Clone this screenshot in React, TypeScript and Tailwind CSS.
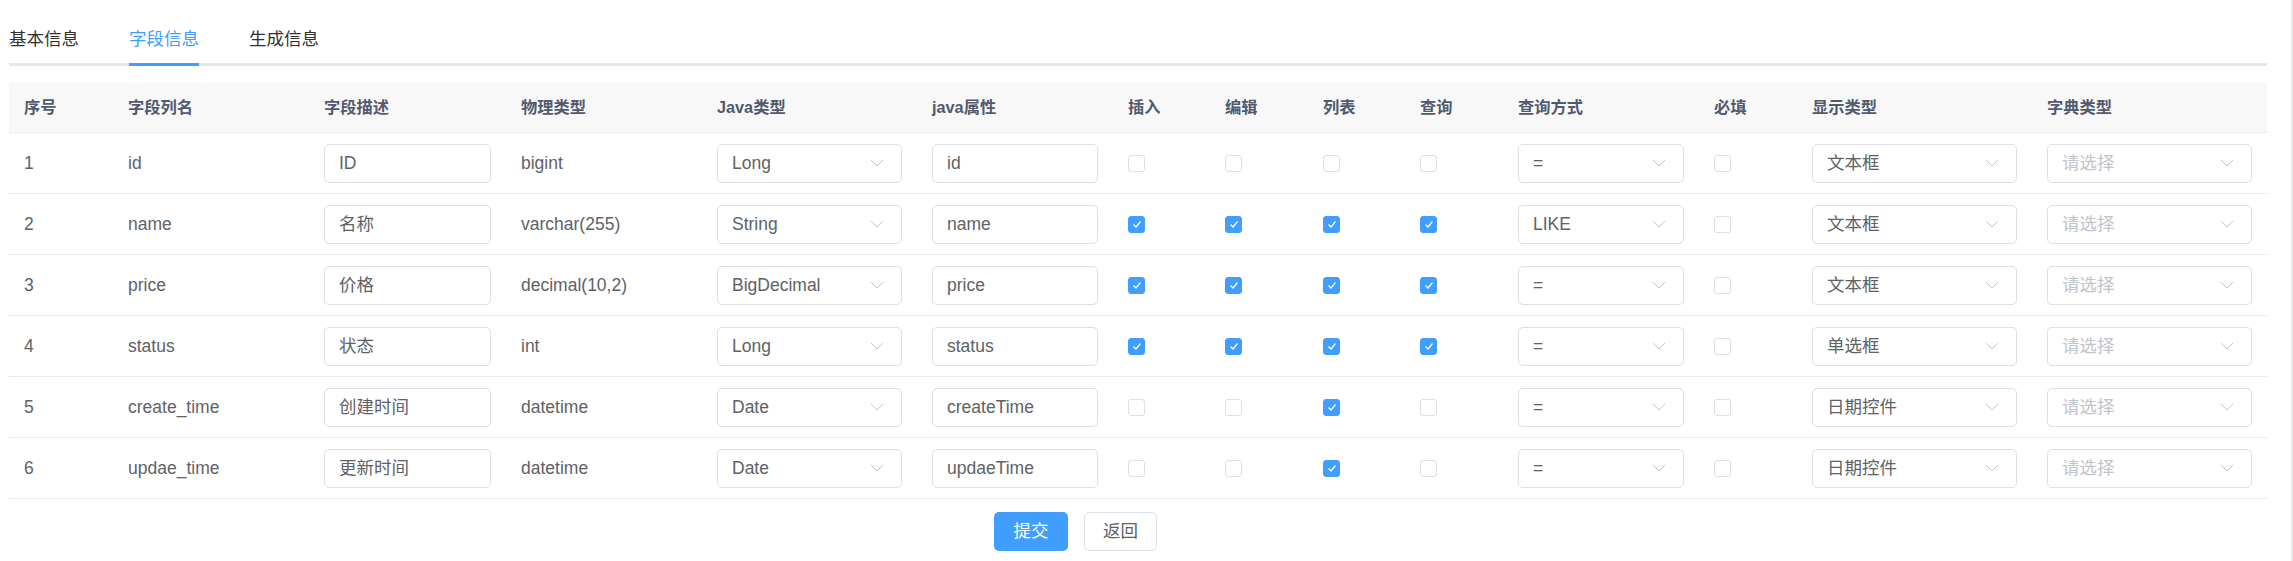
import React from 'react'

interface Field {
  id: number
  column: string
  comment: string
  dbType: string
  javaType: string
  javaField: string
  insert: boolean
  edit: boolean
  list: boolean
  query: boolean
  queryType: string
  htmlType: string
}

const fields: Field[] = [
  { id: 1, column: 'id', comment: 'ID', dbType: 'bigint', javaType: 'Long', javaField: 'id', insert: false, edit: false, list: false, query: false, queryType: '=', htmlType: '文本框' },
  { id: 2, column: 'name', comment: '名称', dbType: 'varchar(255)', javaType: 'String', javaField: 'name', insert: true, edit: true, list: true, query: true, queryType: 'LIKE', htmlType: '文本框' },
  { id: 3, column: 'price', comment: '价格', dbType: 'decimal(10,2)', javaType: 'BigDecimal', javaField: 'price', insert: true, edit: true, list: true, query: true, queryType: '=', htmlType: '文本框' },
  { id: 4, column: 'status', comment: '状态', dbType: 'int', javaType: 'Long', javaField: 'status', insert: true, edit: true, list: true, query: true, queryType: '=', htmlType: '单选框' },
  { id: 5, column: 'create_time', comment: '创建时间', dbType: 'datetime', javaType: 'Date', javaField: 'createTime', insert: false, edit: false, list: true, query: false, queryType: '=', htmlType: '日期控件' },
  { id: 6, column: 'updae_time', comment: '更新时间', dbType: 'datetime', javaType: 'Date', javaField: 'updaeTime', insert: false, edit: false, list: true, query: false, queryType: '=', htmlType: '日期控件' },
]

const headers = ['序号', '字段列名', '字段描述', '物理类型', 'Java类型', 'java属性', '插入', '编辑', '列表', '查询', '查询方式', '必填', '显示类型', '字典类型']

const gridCols =
  'grid grid-cols-[104px_196px_197px_196px_215px_196px_97px_98px_97px_98px_196px_98px_235px_235px]'

const Input = ({ value }: { value: string }) => (
  <div className="w-full h-[39px] flex items-center pl-[14px] border border-[#dcdfe6] rounded-[5px] bg-white text-[#606266]">
    {value}
  </div>
)

const Select = ({ value, placeholder }: { value?: string; placeholder?: string }) => (
  <div className="w-full h-[39px] flex items-center justify-between pl-[14px] pr-[17px] border border-[#dcdfe6] rounded-[5px] bg-white">
    <span className={value ? 'text-[#606266]' : 'text-[#c0c4cc]'}>{value || placeholder}</span>
    <svg width="14" height="8" viewBox="0 0 14 8" fill="none">
      <polyline points="1,1 7,7 13,1" stroke="#c0c4cc" strokeWidth="1" />
    </svg>
  </div>
)

const Checkbox = ({ checked }: { checked: boolean }) =>
  checked ? (
    <div className="w-[17px] h-[17px] rounded-[3px] bg-[#409eff] border border-[#409eff] flex items-center justify-center">
      <svg width="10" height="9" viewBox="0 0 10 9" fill="none">
        <polyline points="1.5,4.5 4,7 8.5,1.5" stroke="#fff" strokeWidth="1.2" />
      </svg>
    </div>
  ) : (
    <div className="w-[17px] h-[17px] rounded-[3px] bg-white border border-[#dcdfe6]" />
  )

const Cell = ({ children }: { children: React.ReactNode }) => (
  <div className="px-[15px] flex items-center">{children}</div>
)

export default function App() {
  return (
    <div
      className="w-full h-[561px] flex bg-white text-[17.5px]"
      style={{ fontFamily: '"Liberation Sans", "Noto Sans CJK SC", sans-serif' }}
    >
      <div className="flex-1 pl-[9px] pr-[24px] pt-[16px]">
        {/* tabs */}
        <div className="relative h-[50px] flex items-center border-b-[3px] border-[#e4e7ed]">
          <div className="pr-[25px] text-[#303133]">基本信息</div>
          <div className="relative px-[25px] h-full flex items-center text-[#409eff]">
            字段信息
            <div className="absolute left-[25px] right-[25px] bottom-[-3px] h-[3px] bg-[#409eff]" />
          </div>
          <div className="px-[25px] text-[#303133]">生成信息</div>
        </div>

        {/* table */}
        <div className="mt-[17px]">
          <div className={`${gridCols} h-[50px] bg-[#f8f8f9] border-b border-[#e8eaec] text-[16.25px] font-bold text-[#515a6e]`}>
            {headers.map((h) => (
              <Cell key={h}>{h}</Cell>
            ))}
          </div>
          {fields.map((f) => (
            <div key={f.id} className={`${gridCols} h-[61px] border-b border-[#e8eaec] text-[#606266]`}>
              <Cell>{f.id}</Cell>
              <Cell>{f.column}</Cell>
              <Cell>
                <Input value={f.comment} />
              </Cell>
              <Cell>{f.dbType}</Cell>
              <Cell>
                <Select value={f.javaType} />
              </Cell>
              <Cell>
                <Input value={f.javaField} />
              </Cell>
              <Cell>
                <Checkbox checked={f.insert} />
              </Cell>
              <Cell>
                <Checkbox checked={f.edit} />
              </Cell>
              <Cell>
                <Checkbox checked={f.list} />
              </Cell>
              <Cell>
                <Checkbox checked={f.query} />
              </Cell>
              <Cell>
                <Select value={f.queryType} />
              </Cell>
              <Cell>
                <Checkbox checked={false} />
              </Cell>
              <Cell>
                <Select value={f.htmlType} />
              </Cell>
              <Cell>
                <Select placeholder="请选择" />
              </Cell>
            </div>
          ))}
        </div>

        {/* buttons */}
        <div className="mt-[13px] flex gap-[16px] pl-[985px]">
          <button className="w-[74px] h-[39px] rounded-[5px] bg-[#409eff] text-white">提交</button>
          <button className="w-[73px] h-[39px] rounded-[5px] bg-white border border-[#dcdfe6] text-[#606266]">返回</button>
        </div>
      </div>
      <div className="w-[2px] h-full bg-[#e8e8e8]" />
    </div>
  )
}
